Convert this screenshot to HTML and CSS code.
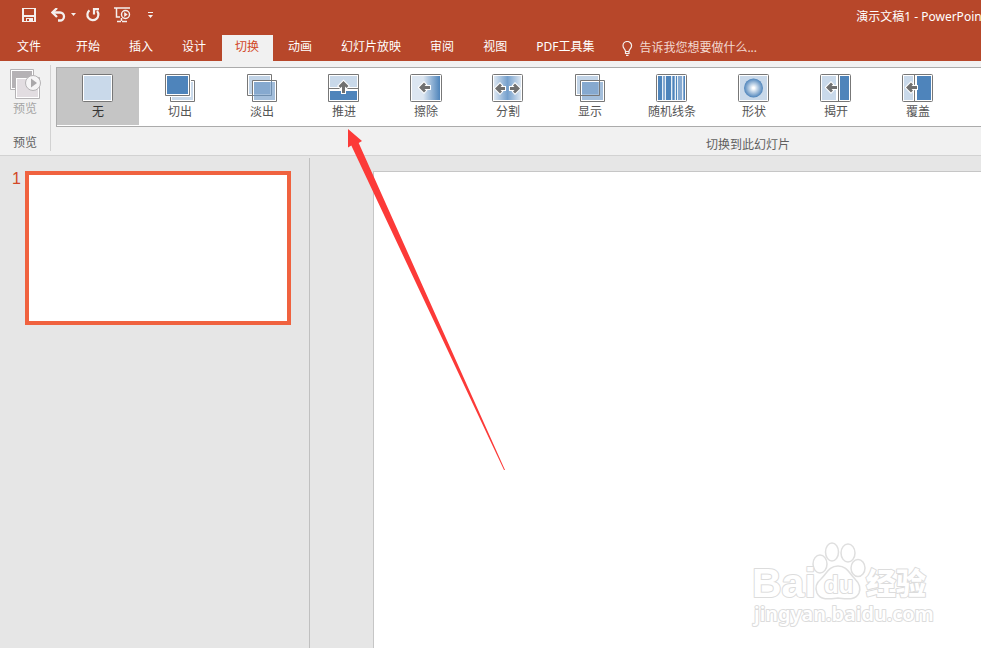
FILE: index.html
```html
<!DOCTYPE html>
<html lang="zh-CN">
<head>
<meta charset="utf-8">
<title>演示文稿1 - PowerPoint</title>
<link rel="stylesheet" href="styles.css">
</head>
<body>
<div class="app">
  <header class="titlebar">
    <div class="quick">
      <button class="tool" aria-label="保存"><svg width="14" height="14" viewBox="0 0 14 14"><path fill="#f5f0ee" fill-rule="evenodd" d="M0 0h14v14H0zM2 1v6h10V1zM2 9v4h2v-3h7v3h1V9zM5 11v2h2v-2z"/></svg></button>
      <button class="tool undo" aria-label="撤消"><svg width="26" height="14" viewBox="0 0 26 14"><path d="M1.500 4.500H9a4 4 0 0 1 0 8H7" fill="none" stroke="#f5f0ee" stroke-width="2.300"/><path d="M6 0L1.500 4.500 6 9" fill="none" stroke="#f5f0ee" stroke-width="2.300"/><path d="M20 5h5l-2.500 3z" fill="#f5f0ee"/></svg></button>
      <button class="tool redo" aria-label="重复"><svg width="14" height="14" viewBox="0 0 14 14"><path d="M3.500 2.300A5.500 5.500 0 1 0 11 3" fill="none" stroke="#f5f0ee" stroke-width="2.200"/><path d="M8 6.500V1.200H13" fill="none" stroke="#f5f0ee" stroke-width="2.200"/></svg></button>
      <button class="tool show" aria-label="从头开始"><svg width="17" height="16" viewBox="0 0 17 16"><path d="M0 1h16M2.500 1v9H6M7.500 11v3M3 14.500h4M8 14.500h5" fill="none" stroke="#f5f0ee" stroke-width="1.500"/><circle cx="11.500" cy="7.500" r="4" fill="none" stroke="#f5f0ee" stroke-width="1.400"/><path d="M10.200 5v5l3.500-2.500z" fill="#f5f0ee"/></svg></button>
      <button class="tool more" aria-label="自定义快速访问工具栏"><svg width="5" height="8" viewBox="0 0 5 8"><path d="M0 1h5v1H0zM0 4h5L2.500 7z" fill="#f5f0ee"/></svg></button>
    </div>
    <div class="doc-title">演示文稿1 - PowerPoint</div>
  </header>

  <nav class="tabs">
    <button class="tab file">文件</button>
    <button class="tab">开始</button>
    <button class="tab">插入</button>
    <button class="tab">设计</button>
    <button class="tab active">切换</button>
    <button class="tab">动画</button>
    <button class="tab">幻灯片放映</button>
    <button class="tab">审阅</button>
    <button class="tab">视图</button>
    <button class="tab">PDF工具集</button>
    <button class="tell"><svg width="11" height="15" viewBox="0 0 11 15"><path d="M3.500 10.500C3.500 8 1 7.500 1 4.800a4.300 4.300 0 0 1 8.600 0C9.600 7.500 7 8 7 10.500zM3.500 10.500v2H7v-2M4 14.300h2.500" fill="none" stroke="#f5f0ee" stroke-width="1.200"/></svg>告诉我您想要做什么...</button>
  </nav>

  <section class="ribbon">
    <div class="group preview">
      <button class="preview-btn" disabled>
        <svg width="32" height="32" viewBox="0 0 32 32"><path d="M1.500 1.500h23v20h-23z" fill="#fff" stroke="#b5b3b5"/><path d="M3 3h20v17H3z" fill="#b5b2b5"/><path d="M6.500 9.500h24v21h-24z" fill="#fff" stroke="#b5b3b5"/><path d="M8 11h21v18H8z" fill="#e2dde1"/><circle cx="24" cy="15" r="7.500" fill="#f6f5f6" stroke="#b5b3b5"/><path d="M22 10.500v9l6-4.500z" fill="#aaa8aa"/></svg>
        <span>预览</span>
      </button>
      <div class="group-name">预览</div>
    </div>
    <div class="group transitions">
      <div class="gallery">
        <button class="item selected"><svg width="32" height="28" viewBox="0 0 32 28"><rect x=".5" y=".5" width="30" height="27" rx="1" fill="#fff" stroke="#777"/><path d="M2 2h27v24H2z" fill="#c9d9ea"/></svg><span>无</span></button>
        <button class="item"><svg width="32" height="28" viewBox="0 0 32 28"><path d="M6.500 6.500h24v21h-24z" fill="#fff" stroke="#777"/><path d="M8 8h21v18H8z" fill="#c9d9ea"/><path d="M0 0h27v23H0z" fill="#fff"/><path d="M1.500.5h24v21h-24z" fill="#fff" stroke="#777"/><path d="M3 2h21v18H3z" fill="#4e84bb"/></svg><span>切出</span></button>
        <button class="item"><svg width="32" height="28" viewBox="0 0 32 28"><path d="M1.500.5h24v21h-24z" fill="#fff" stroke="#777"/><path d="M3 2h21v18H3z" fill="#c2d4e7"/><path d="M6.500 6.500h24v21h-24z" fill="#fff" stroke="#777"/><path d="M8 8h21v18H8z" fill="#a3bedb"/><path d="M8 8h16v12H8z" fill="#86a9cf"/><path d="M7 21.500h18.500V7" fill="none" stroke="#6f8eae"/></svg><span>淡出</span></button>
        <button class="item"><svg width="32" height="28" viewBox="0 0 32 28"><path d="M.5.500h30v27H.5z" fill="#fff" stroke="#777"/><path d="M2 2h27v11H2z" fill="#c9d9ea"/><path d="M1 14.500h29" stroke="#777"/><path d="M2 17h27v9H2z" fill="#4e84bb"/><path d="M15.500 7l-5 5 2 2 1.500-1.500V19h3v-6.500l1.500 1.500 2-2z" fill="#707070" stroke="#fff" stroke-width="2" paint-order="stroke"/></svg><span>推进</span></button>
        <button class="item"><svg width="32" height="28" viewBox="0 0 32 28"><defs><linearGradient id="wipe"><stop offset=".4" stop-color="#dce6f1"/><stop offset="1" stop-color="#4e84bb"/></linearGradient></defs><rect x=".5" y=".5" width="31" height="27" rx="1" fill="#fff" stroke="#777"/><path d="M2 2h28v24H2z" fill="url(#wipe)"/><path d="M9 13.500l5-5 2 2-1.500 1.500H20v3h-5.500l1.500 1.500-2 2z" fill="#707070" stroke="#fff" stroke-width="2" paint-order="stroke"/></svg><span>擦除</span></button>
        <button class="item"><svg width="32" height="28" viewBox="0 0 32 28"><defs><linearGradient id="split"><stop stop-color="#dce6f1"/><stop offset=".5" stop-color="#75a0cd"/><stop offset="1" stop-color="#dce6f1"/></linearGradient></defs><rect x=".5" y=".5" width="30" height="27" rx="1" fill="#fff" stroke="#777"/><path d="M2 2h27v24H2z" fill="url(#split)"/><path d="M3 14.500l5-5 2 2L8.500 13H13v3H8.500l1.500 1.500-2 2zM28 14.500l-5-5-2 2 1.500 1.500H18v3h4.500L21 17.500l2 2z" fill="#707070" stroke="#fff" stroke-width="2" paint-order="stroke"/></svg><span>分割</span></button>
        <button class="item"><svg width="32" height="28" viewBox="0 0 32 28"><path d="M1.500.5h24v21h-24z" fill="#fff" stroke="#777"/><path d="M3 2h21v18H3z" fill="#c2d4e7"/><path d="M6.500 6.500h24v21h-24z" fill="#fff" stroke="#777"/><path d="M8 8h21v18H8z" fill="#a3bedb"/><path d="M8 8h16v12H8z" fill="#86a9cf"/><path d="M7 21.500h18.500V7" fill="none" stroke="#777"/></svg><span>显示</span></button>
        <button class="item"><svg width="32" height="28" viewBox="0 0 32 28"><rect x=".5" y=".5" width="30" height="27" rx="1" fill="#fff" stroke="#777"/><path d="M2 2h27v24H2z" fill="#87aad1"/><path d="M2 2h4v24H2zM10 2h5v24h-5zM17 2h1v24h-1zM20 2h1v24h-1zM28 2h1v24h-1z" fill="#4e84bb"/><path d="M6 2h1v24H6zM9 2h1v24H9zM15 2h1v24h-1zM19 2h1v24h-1zM21 2h1v24h-1zM26 2h1v24h-1z" fill="#e8f0f7"/></svg><span>随机线条</span></button>
        <button class="item"><svg width="32" height="28" viewBox="0 0 32 28"><defs><radialGradient id="shape"><stop offset=".1" stop-color="#fff"/><stop offset="1" stop-color="#4e84bb"/></radialGradient></defs><rect x=".5" y=".5" width="30" height="27" rx="1" fill="#fff" stroke="#777"/><path d="M2 2h27v24H2z" fill="#c9d9ea"/><circle cx="15.500" cy="14" r="9.500" fill="url(#shape)"/></svg><span>形状</span></button>
        <button class="item"><svg width="32" height="28" viewBox="0 0 32 28"><rect x=".5" y=".5" width="30" height="27" rx="1" fill="#fff" stroke="#777"/><path d="M2 2h14v24H2z" fill="#c9d9ea"/><path d="M18.500 1v26" stroke="#777"/><path d="M20 2h9v24h-9z" fill="#4e84bb"/><path d="M6 13.500l5-5 2 2-1.500 1.500H17v3h-5.500l1.500 1.500-2 2z" fill="#707070" stroke="#fff" stroke-width="2" paint-order="stroke"/></svg><span>揭开</span></button>
        <button class="item"><svg width="32" height="28" viewBox="0 0 32 28"><rect x=".5" y=".5" width="30" height="27" rx="1" fill="#fff" stroke="#777"/><path d="M2 2h9v24H2z" fill="#c9d9ea"/><path d="M12.500 1v26" stroke="#777"/><path d="M15 2h14v24H15z" fill="#4e84bb"/><path d="M4 13.500l5-5 2 2-1.500 1.500H15v3H9.500l1.500 1.500-2 2z" fill="#707070" stroke="#fff" stroke-width="2" paint-order="stroke"/></svg><span>覆盖</span></button>
      </div>
      <div class="group-name">切换到此幻灯片</div>
    </div>
  </section>

  <main class="workspace">
    <aside class="thumbs">
      <span class="number">1</span>
      <button class="thumb" aria-label="幻灯片 1"></button>
    </aside>
    <div class="stage"><div class="slide"></div></div>
  </main>

  <svg class="pointer" width="160" height="344" viewBox="0 0 160 344"><path d="M1 1l14 12-3.300 2L158 342h-1L4.300 17.500 1 19.500z" fill="#fc3a38"/></svg>

  <svg class="watermark" width="190" height="92" viewBox="0 0 190 92">
    <g fill="#fff" stroke="#dfdfdf" stroke-width="1.500">
      <ellipse cx="79" cy="24" rx="7" ry="9"/><ellipse cx="91" cy="12" rx="6.500" ry="9"/><ellipse cx="107" cy="13" rx="7" ry="9"/><ellipse cx="117" cy="28" rx="7" ry="8.500"/>
      <path d="M97 26c-9 0-11 7-17 13-5 4-6 9-4 14 3 7 10 6 21 5 11 1 18 2 21-5 2-5 0-10-4-14-6-6-8-13-17-13z"/>
    </g>
    <g class="mark">
      <text class="brand" x="11" y="57">Bai</text>
      <text class="du" x="83" y="53">du</text>
      <text class="exp" x="125" y="54">经验</text>
      <text class="url" x="13" y="81">jingyan.baidu.com</text>
    </g>
  </svg>
</div>
</body>
</html>
```
FILE: styles.css
```css
* { box-sizing: border-box; }
body {
  margin: 0;
  font: 12px/16px "Noto Sans", "Noto Sans CJK SC", sans-serif;
  color: #555;
}
button {
  margin: 0;
  padding: 0;
  border: 0;
  background: none;
  font: inherit;
  color: inherit;
  white-space: nowrap;
}
svg { display: block; flex: none; }
.app {
  position: relative;
  display: flex;
  flex-direction: column;
  min-height: 100vh;
  overflow: hidden;
  background: #e6e6e6;
}
.titlebar {
  display: flex;
  align-items: center;
  height: 35px;
  padding: 0 0 5px 22px;
  background: #b7472a;
  color: #fff;
}
.quick { display: flex; align-items: center; }
.undo { margin-left: 15px; }
.redo { margin-left: 9px; }
.show { margin-left: 14px; }
.more { margin-left: 17px; }
.doc-title {
  flex: none;
  margin-left: auto;
  margin-right: -5px;
  padding-top: 4px;
  white-space: nowrap;
}
.tabs {
  display: flex;
  gap: 2px;
  height: 26px;
  padding-left: 4px;
  background: #b7472a;
  color: #fff;
}
.tab { padding: 0 14px 2px 13px; }
.file { margin-right: 6px; }
.active { background: #f1f1f1; color: #d24726; }
.tell {
  display: flex;
  align-items: center;
  gap: 6px;
  margin-left: 12px;
  color: #f3d9d1;
}
.ribbon {
  display: flex;
  height: 95px;
  padding-top: 4px;
  background: #f1f1f1;
  border-bottom: 1px solid #d2d2d2;
  overflow: hidden;
}
.group { display: flex; flex-direction: column; }
.preview {
  width: 51px;
  height: 86px;
  border-right: 1px solid #d2d2d2;
}
.preview-btn {
  display: flex;
  flex-direction: column;
  align-items: center;
  gap: 1px;
  height: 62px;
  padding-top: 3px;
  color: #a5a5a5;
}
.group-name { margin-top: 10px; color: #606060; }
.preview .group-name { text-align: center; }
.transitions { flex: 1; padding: 2px 0 0 5px; }
.gallery {
  display: flex;
  height: 60px;
  background: #fff;
  border: 1px solid #ababab;
  border-right: 0;
}
.item {
  display: flex;
  flex: none;
  flex-direction: column;
  align-items: center;
  gap: 2px;
  width: 82px;
  height: 57px;
  padding-top: 6px;
}
.selected { background: #c5c5c5; color: #333; }
.transitions .group-name { padding-left: 650px; }
.workspace { display: flex; flex: 1; padding-top: 2px; }
.thumbs {
  display: flex;
  align-items: flex-start;
  gap: 4px;
  width: 310px;
  padding: 13px 18px 0 12px;
  border-right: 1px solid #c0c0c0;
}
.number {
  width: 9px;
  font-family: "Liberation Sans", sans-serif;
  font-size: 16px;
  color: #d24726;
}
.thumb {
  flex: 1;
  height: 154px;
  border: 4px solid #f0623f;
  background: #fff;
}
.stage { display: flex; flex: 1; padding: 13px 0 0 63px; }
.slide {
  flex: 1;
  background: #fff;
  border: solid #c6c6c6;
  border-width: 1px 0 0 1px;
}
.pointer { position: absolute; left: 347px; top: 128px; }
.watermark { position: absolute; right: 50px; bottom: 16px; overflow: visible; }
.mark text {
  fill: #fff;
  stroke: #dcdcdc;
  stroke-width: 2px;
  stroke-linejoin: round;
  paint-order: stroke;
}
.brand { font: bold 41px "Liberation Sans", sans-serif; }
.mark .du { font: bold 24px "Liberation Sans", sans-serif; }
.exp { font: 900 30px "Noto Sans CJK SC", sans-serif; }
.url { font: 600 20px "Noto Sans", sans-serif; }
```
